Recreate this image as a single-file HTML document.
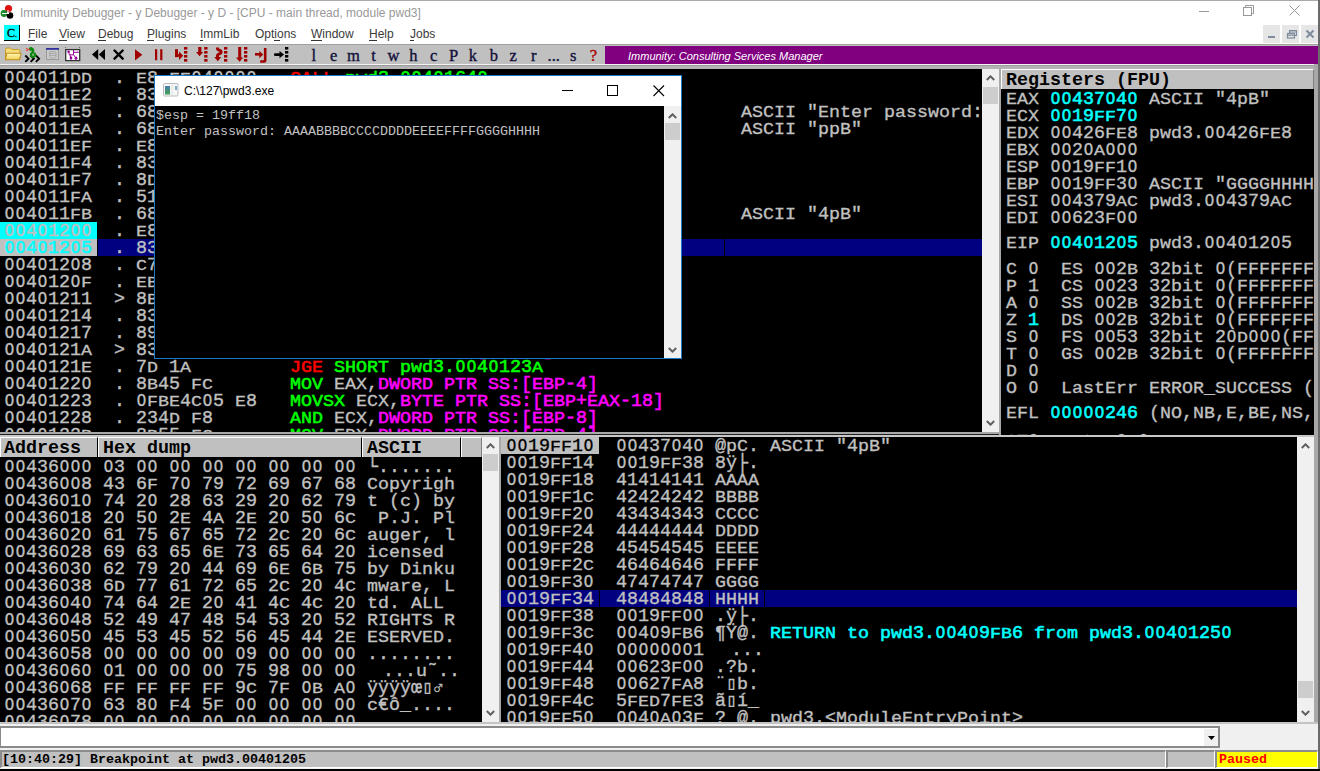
<!DOCTYPE html><html><head><meta charset="utf-8"><style>
*{margin:0;padding:0;box-sizing:border-box}
html,body{width:1320px;height:771px;overflow:hidden;background:#c0c0c0;position:relative}
div{position:absolute}
.t{white-space:pre;font-family:"Liberation Mono",monospace;font-size:18.333px;line-height:17px;height:17px;color:#c0c0c0;-webkit-text-stroke:0.35px currentColor}
.t i{font-style:normal;display:inline-block;transform-origin:0 13.4px}
.t i.c{transform:scaleY(.85)}
.t i.l{transform:scaleY(.9)}
.nh i.c,.nh i.l{transform:none}
.t b{font-weight:inherit;display:inline-block;transform:scaleX(.86)}
.t i.s{transform:scaleY(.75)}
.clip{overflow:hidden}
.ui{font-family:"Liberation Sans",sans-serif;font-size:12px;white-space:pre}
.sb{background:#f0f0f0}
.hdr{background:#c0c0c0;border-top:1px solid #fff;border-left:1px solid #fff;border-right:1px solid #808080}
.ht{font-weight:bold;color:#000}
</style></head><body>

<div style="left:0;top:0;width:1320px;height:1px;background:#aaa"></div>
<div style="left:0;top:1px;width:1318px;height:43px;background:#fff"></div>
<div style="left:1318px;top:0;width:2px;height:771px;background:#6a6a6a"></div>
<svg style="position:absolute;left:0;top:4px" width="16" height="16" viewBox="0 0 16 16">
<circle cx="8.5" cy="4.5" r="3.6" fill="#e01010"/><circle cx="4" cy="9.5" r="3.4" fill="#1a8a2a"/><circle cx="10" cy="11.5" r="3.3" fill="#000"/>
<path d="M2 9.5h7M8 6v4" stroke="#fff" stroke-width="1"/></svg>
<div class="ui" style="left:20px;top:6px;color:#999;font-size:12px">Immunity Debugger - y Debugger - y D - [CPU - main thread, module pwd3]</div>
<div style="left:1199px;top:11px;width:10px;height:1px;background:#999"></div>
<svg style="position:absolute;left:1243px;top:5px" width="12" height="12"><rect x="0.5" y="2.5" width="8" height="8" fill="none" stroke="#999"/><path d="M2.5 2.5V0.5H10.5V8.5H8.5" fill="none" stroke="#999"/></svg>
<svg style="position:absolute;left:1289px;top:5px" width="12" height="12"><path d="M0.5 0.5L10.5 10.5M10.5 0.5L0.5 10.5" stroke="#999" stroke-width="1"/></svg>
<div style="left:4px;top:25px;width:16px;height:16px;background:#00ffff;border-right:1px solid #000;border-bottom:1px solid #000"></div>
<div style="left:7px;top:26px;font:12px/14px 'Liberation Serif';color:#000;-webkit-text-stroke:0.3px #000">C<span style="font-size:8px">.</span></div>
<div class="ui" style="left:28px;top:27px;color:#3a3a3a">File</div>
<div class="ui" style="left:59px;top:27px;color:#3a3a3a">View</div>
<div class="ui" style="left:98px;top:27px;color:#3a3a3a">Debug</div>
<div class="ui" style="left:147px;top:27px;color:#3a3a3a">Plugins</div>
<div class="ui" style="left:200px;top:27px;color:#3a3a3a">ImmLib</div>
<div class="ui" style="left:255px;top:27px;color:#3a3a3a">Options</div>
<div class="ui" style="left:311px;top:27px;color:#3a3a3a">Window</div>
<div class="ui" style="left:369px;top:27px;color:#3a3a3a">Help</div>
<div class="ui" style="left:410px;top:27px;color:#3a3a3a">Jobs</div>
<div style="left:28px;top:40px;width:7px;height:1px;background:#333"></div>
<div style="left:59px;top:40px;width:8px;height:1px;background:#333"></div>
<div style="left:98px;top:40px;width:8px;height:1px;background:#333"></div>
<div style="left:147px;top:40px;width:7px;height:1px;background:#333"></div>
<div style="left:200px;top:40px;width:3px;height:1px;background:#333"></div>
<div style="left:274px;top:40px;width:6px;height:1px;background:#333"></div>
<div style="left:311px;top:40px;width:11px;height:1px;background:#333"></div>
<div style="left:369px;top:40px;width:8px;height:1px;background:#333"></div>
<div style="left:410px;top:40px;width:4px;height:1px;background:#333"></div>
<div style="left:1263px;top:25px;width:17px;height:18px;background:#e6e6e6"></div>
<div style="left:1282px;top:25px;width:17px;height:18px;background:#e6e6e6"></div>
<div style="left:1301px;top:25px;width:17px;height:18px;background:#e6e6e6"></div>
<div style="left:1268px;top:36px;width:7px;height:2px;background:#7d8b9c"></div>
<svg style="position:absolute;left:1286px;top:29px" width="12" height="10"><rect x="1.5" y="4.5" width="7" height="4.5" fill="none" stroke="#7d8b9c" stroke-width="1.2"/><path d="M1.5 6.2h7" stroke="#7d8b9c" stroke-width="1.2"/><path d="M3.5 4.5V1.5H10.5V6.5H8.5M3.5 3h7" fill="none" stroke="#7d8b9c" stroke-width="1.1"/></svg>
<svg style="position:absolute;left:1305px;top:29px" width="10" height="10"><path d="M1.5 1.5L8.5 8.5M8.5 1.5L1.5 8.5" stroke="#7d8b9c" stroke-width="2"/></svg>
<div style="left:0;top:44px;width:1318px;height:1px;background:#a0a0a0"></div>
<div style="left:0;top:45px;width:1318px;height:19px;background:#c0c0c0"></div>
<div style="left:0;top:64px;width:1318px;height:1px;background:#f4f4f4"></div>
<div style="left:0;top:65px;width:1318px;height:4px;background:#b4b4b4;border-top:1px solid #9c9c9c"></div>
<svg style="position:absolute;left:0;top:44px" width="300" height="22" viewBox="0 0 300 22">
<defs><linearGradient id="fg" x1="0" y1="0" x2="0" y2="1"><stop offset="0" stop-color="#fff6b0"/><stop offset="1" stop-color="#f2d25a"/></linearGradient></defs>
<path d="M5.5 5.5q0-1.5 1.5-1.5h3.5l1.5 1.5h6.5q1.5 0 1.5 1.5v8.5h-14.5z" fill="#f6dc78" stroke="#c89a28" stroke-width="1"/>
<path d="M6.8 9.2h13.5q1 0 .7 1l-1.6 5.6h-14z" fill="url(#fg)" stroke="#c08f20" stroke-width="1.1"/>
<path d="M25.3 11.5l3.2 3.2-3.2 3.2M30.6 11.5l3.2 3.2-3.2 3.2M35.9 11.5l3.2 3.2-3.2 3.2" fill="none" stroke="#000" stroke-width="1.9"/>
<circle cx="30.8" cy="5" r="2" fill="#0a8a0a"/><path d="M30.8 4.6C33.6 4.6 34 7 32 8.8 29.8 10.8 31.5 13.5 34 12.6 36 11.8 35.6 9.2 33.4 9.5" fill="none" stroke="#0a8a0a" stroke-width="2.3"/>
<path d="M28 5.5h1.8M28 5.5l-1.8-1.3M28 5.5l-1.6 1.6" stroke="#f03a3a" stroke-width="1.2"/>
<rect x="46.5" y="4.5" width="12" height="11" fill="#cacaca" stroke="#9a9a9a"/><rect x="46" y="4" width="13" height="1.8" fill="#30309a"/>
<rect x="49.5" y="7.5" width="6.5" height="6.5" rx="1.5" fill="none" stroke="#a8a8a8"/><path d="M50 9.5h5.5M50 11.5h6" stroke="#a8a8a8"/>
<rect x="65.7" y="5.6" width="14" height="11" fill="#fff" stroke="#333" stroke-width="1.3"/>
<path d="M65.5 3v1M79.5 3v1" stroke="#666"/>
<g fill="#990099" stroke="#990099"><circle cx="68.6" cy="7.8" r="1.3" stroke="none"/><path d="M68.8 8.5l.6 2.3h4.1M73.5 6v4.8M73.5 8.3h4.3M73.5 10.8l2 2.6M70 10.8l.5 2.5" fill="none" stroke-width="1"/>
<ellipse cx="71" cy="14" rx="1.3" ry="1.7" stroke="none"/><ellipse cx="76" cy="14.2" rx="1.4" ry="1.6" stroke="none"/><circle cx="78" cy="8.3" r=".8" stroke="none"/></g>
<path d="M92 10.5l6.2-5.5v11zM98.8 10.5l6.2-5.5v11z" fill="#000"/>
<path d="M114.5 6.5l8.2 8.2M122.7 6.5l-8.2 8.2" stroke="#000" stroke-width="2.4" stroke-linecap="round"/>
<path d="M135 5.2l7.3 5.6-7.3 5.6z" fill="#a00000"/>
<rect x="155" y="5.2" width="2.2" height="11" fill="#a00000"/><rect x="160.2" y="5.2" width="2.2" height="11" fill="#a00000"/>
<g fill="#a00000">
<rect x="175" y="5.2" width="3" height="8"/><rect x="175" y="10.2" width="5" height="2.6"/><path d="M179 7.5l4.2 4.2-4.2 4.2z"/>
<rect x="184" y="3" width="3.3" height="2.6"/><rect x="184" y="7" width="3.3" height="2.6"/><rect x="184" y="11" width="3.3" height="2.6"/><rect x="184" y="15" width="3.3" height="2.6"/>
<rect x="198.2" y="3" width="3.2" height="6"/><path d="M196 8h7.2l-3.6 4.2z"/>
<rect x="204.2" y="3" width="3.3" height="2.6"/><rect x="204.2" y="7" width="3.3" height="2.6"/><rect x="204.2" y="11" width="3.3" height="2.6"/><rect x="204.2" y="15" width="3.3" height="2.6"/>
<path d="M217.5 3.5v1.5c0 1.5 3.7.8 3.7 3 0 2.2-3.7 1.5-3.7 3.5v2" fill="none" stroke="#a00000" stroke-width="3"/><path d="M214.2 13h7.2l-3.6 4.2z"/>
<rect x="224" y="3" width="3.3" height="2.6"/><rect x="224" y="7" width="3.3" height="2.6"/><rect x="224" y="11" width="3.3" height="2.6"/><rect x="224" y="15" width="3.3" height="2.6"/>
<rect x="238.2" y="3" width="3" height="11"/><path d="M236 13.5h7.2l-3.6 4.2z"/>
<rect x="244" y="3" width="3.3" height="2.6"/><rect x="244" y="7" width="3.3" height="2.6"/><rect x="244" y="11" width="3.3" height="2.6"/><rect x="244" y="15" width="3.3" height="2.6"/>
<rect x="255" y="9" width="5" height="2.6"/><path d="M259.3 7l4 3.6-4 3.6z"/><path d="M265.2 4v12.5q0 1-1 1h-4" fill="none" stroke="#a00000" stroke-width="2.6"/>
</g>
<rect x="274" y="9.3" width="6.5" height="2.6" rx="1.2" fill="#000"/><path d="M279.5 7l4.6 3.6-4.6 3.6z" fill="#000"/>
<rect x="285" y="3" width="3.3" height="2.6" fill="#000"/><rect x="285" y="7" width="3.3" height="2.6" fill="#000"/><rect x="285" y="11" width="3.3" height="2.6" fill="#000"/><rect x="285" y="15" width="3.3" height="2.6" fill="#000"/>
</svg>
<div style="left:303.9px;top:46px;width:20px;text-align:center;font:16.5px 'Liberation Serif';color:#10103a;white-space:pre;-webkit-text-stroke:0.35px #10103a">l</div>
<div style="left:323.7px;top:46px;width:20px;text-align:center;font:16.5px 'Liberation Serif';color:#10103a;white-space:pre;-webkit-text-stroke:0.35px #10103a">e</div>
<div style="left:343.5px;top:46px;width:20px;text-align:center;font:16.5px 'Liberation Serif';color:#10103a;white-space:pre;-webkit-text-stroke:0.35px #10103a">m</div>
<div style="left:363.5px;top:46px;width:20px;text-align:center;font:16.5px 'Liberation Serif';color:#10103a;white-space:pre;-webkit-text-stroke:0.35px #10103a">t</div>
<div style="left:383.4px;top:46px;width:20px;text-align:center;font:16.5px 'Liberation Serif';color:#10103a;white-space:pre;-webkit-text-stroke:0.35px #10103a">w</div>
<div style="left:403.3px;top:46px;width:20px;text-align:center;font:16.5px 'Liberation Serif';color:#10103a;white-space:pre;-webkit-text-stroke:0.35px #10103a">h</div>
<div style="left:423.7px;top:46px;width:20px;text-align:center;font:16.5px 'Liberation Serif';color:#10103a;white-space:pre;-webkit-text-stroke:0.35px #10103a">c</div>
<div style="left:443.5px;top:46px;width:20px;text-align:center;font:16.5px 'Liberation Serif';color:#10103a;white-space:pre;-webkit-text-stroke:0.35px #10103a">P</div>
<div style="left:462.8px;top:46px;width:20px;text-align:center;font:16.5px 'Liberation Serif';color:#10103a;white-space:pre;-webkit-text-stroke:0.35px #10103a">k</div>
<div style="left:483.8px;top:46px;width:20px;text-align:center;font:16.5px 'Liberation Serif';color:#10103a;white-space:pre;-webkit-text-stroke:0.35px #10103a">b</div>
<div style="left:503.1px;top:46px;width:20px;text-align:center;font:16.5px 'Liberation Serif';color:#10103a;white-space:pre;-webkit-text-stroke:0.35px #10103a">z</div>
<div style="left:523.8px;top:46px;width:20px;text-align:center;font:16.5px 'Liberation Serif';color:#10103a;white-space:pre;-webkit-text-stroke:0.35px #10103a">r</div>
<div style="left:543.8px;top:46px;width:20px;text-align:center;font:16.5px 'Liberation Serif';color:#10103a;white-space:pre;-webkit-text-stroke:0.35px #10103a">...</div>
<div style="left:563.2px;top:46px;width:20px;text-align:center;font:16.5px 'Liberation Serif';color:#10103a;white-space:pre;-webkit-text-stroke:0.35px #10103a">s</div>
<div style="left:583.4px;top:46px;width:20px;text-align:center;font:16.5px 'Liberation Serif';color:#aa0000;white-space:pre;-webkit-text-stroke:0.35px #aa0000">?</div>
<div style="left:605px;top:46px;width:713px;height:18px;background:#800080"></div>
<div class="ui" style="left:628px;top:50px;color:#fff;font-style:italic;font-size:11px">Immunity: Consulting Services Manager</div>
<div class="clip" style="left:0;top:69px;width:982px;height:363px;background:#000">
<div style="left:0;top:153px;width:97px;height:17px;background:#00ffff"></div>
<div style="left:0;top:170px;width:97px;height:17px;background:#c0c0c0"></div>
<div style="left:98px;top:170px;width:626px;height:17px;background:#000080"></div>
<div style="left:725px;top:170px;width:257px;height:17px;background:#000080"></div>
<div class="t" style="left:4px;top:1px"><b>O</b><b>O</b>4<b>O</b>11<i class="s">DD</i>  . <i class="s">E</i>8 <i class="s">FE</i><b>O</b>4<b>O</b><b>O</b><b>O</b><b>O</b>   <span style="color:#ff0000;-webkit-text-stroke:0.6px #ff0000"><i class="c">CA</i><i class="c">LL</i></span><span style="color:#00ff00;-webkit-text-stroke:0.6px #00ff00"> <i class="l">pwd</i>3.<b>O</b><b>O</b>4<b>O</b>164<b>O</b></span></div>
<div class="t" style="left:4px;top:18px"><b>O</b><b>O</b>4<b>O</b>11<i class="s">E</i>2  . 83<i class="s">C</i>4 <b>O</b>8       <span style="color:#00ff00;-webkit-text-stroke:0.6px #00ff00"><i class="c">ADD</i></span> <i class="c">E</i><i class="c">SP</i>,8</div>
<div class="t" style="left:4px;top:35px"><b>O</b><b>O</b>4<b>O</b>11<i class="s">E</i>5  . 68 1<b>O</b>7<b>O</b>43<b>O</b><b>O</b>   <span style="color:#00ff00;-webkit-text-stroke:0.6px #00ff00"><i class="c">PUSH</i></span> <i class="l">pwd</i>3.<b>O</b><b>O</b>437<b>O</b>1<b>O</b></div>
<div class="t" style="left:741px;top:35px"><i class="c">A</i><i class="c">S</i><i class="c">C</i><i class="c">II</i> "<i class="c">E</i><i class="l">nter</i> <i class="l">password</i>: "</div>
<div class="t" style="left:4px;top:52px"><b>O</b><b>O</b>4<b>O</b>11<i class="s">EA</i>  . 68 <b>O</b><i class="s">C</i>7<b>O</b>43<b>O</b><b>O</b>   <span style="color:#00ff00;-webkit-text-stroke:0.6px #00ff00"><i class="c">PUSH</i></span> <i class="l">pwd</i>3.<b>O</b><b>O</b>437<b>O</b><b>O</b><i class="s">C</i></div>
<div class="t" style="left:741px;top:52px"><i class="c">A</i><i class="c">S</i><i class="c">C</i><i class="c">II</i> "<i class="l">pp</i><i class="c">B</i>"</div>
<div class="t" style="left:4px;top:69px"><b>O</b><b>O</b>4<b>O</b>11<i class="s">EF</i>  . <i class="s">E</i>8 <i class="s">EC</i><b>O</b>4<b>O</b><b>O</b><b>O</b><b>O</b>   <span style="color:#ff0000;-webkit-text-stroke:0.6px #ff0000"><i class="c">CA</i><i class="c">LL</i></span><span style="color:#00ff00;-webkit-text-stroke:0.6px #00ff00"> <i class="l">pwd</i>3.<b>O</b><b>O</b>4<b>O</b>16<i class="s">E</i><b>O</b></span></div>
<div class="t" style="left:4px;top:86px"><b>O</b><b>O</b>4<b>O</b>11<i class="s">F</i>4  . 83<i class="s">C</i>4 <b>O</b>8       <span style="color:#00ff00;-webkit-text-stroke:0.6px #00ff00"><i class="c">ADD</i></span> <i class="c">E</i><i class="c">SP</i>,8</div>
<div class="t" style="left:4px;top:103px"><b>O</b><b>O</b>4<b>O</b>11<i class="s">F</i>7  . 8<i class="s">D</i>4<i class="s">D</i> <i class="s">E</i>8       <span style="color:#00ff00;-webkit-text-stroke:0.6px #00ff00"><i class="c">L</i><i class="c">EA</i></span> <i class="c">EC</i><i class="c">X</i>,<span style="color:#ff00ff;-webkit-text-stroke:0.6px #ff00ff"><i class="c">D</i><i class="c">WOR</i><i class="c">D</i> <i class="c">PTR</i> <i class="c">SS</i>:[<i class="c">EB</i><i class="c">P</i>-18]</span></div>
<div class="t" style="left:4px;top:120px"><b>O</b><b>O</b>4<b>O</b>11<i class="s">FA</i>  . 51            <span style="color:#00ff00;-webkit-text-stroke:0.6px #00ff00"><i class="c">PUSH</i></span> <i class="c">EC</i><i class="c">X</i></div>
<div class="t" style="left:4px;top:137px"><b>O</b><b>O</b>4<b>O</b>11<i class="s">FB</i>  . 68 4<b>O</b>7<b>O</b>43<b>O</b><b>O</b>   <span style="color:#00ff00;-webkit-text-stroke:0.6px #00ff00"><i class="c">PUSH</i></span> <i class="l">pwd</i>3.<b>O</b><b>O</b>437<b>O</b>4<b>O</b></div>
<div class="t" style="left:741px;top:137px"><i class="c">A</i><i class="c">S</i><i class="c">C</i><i class="c">II</i> "4<i class="l">p</i><i class="c">B</i>"</div>
<div class="t" style="left:4px;top:154px"><b>O</b><b>O</b>4<b>O</b>12<b>O</b><b>O</b>  . <i class="s">E</i>8 2<i class="s">B</i><b>O</b>3<b>O</b><b>O</b><b>O</b><b>O</b>   <span style="color:#ff0000;-webkit-text-stroke:0.6px #ff0000"><i class="c">CA</i><i class="c">LL</i></span><span style="color:#00ff00;-webkit-text-stroke:0.6px #00ff00"> <i class="l">pwd</i>3.<b>O</b><b>O</b>4<b>O</b>153<b>O</b></span></div>
<div class="t" style="left:4px;top:171px"><span style="color:#00ffff;-webkit-text-stroke:0.6px #00ffff"><b>O</b><b>O</b>4<b>O</b>12<b>O</b>5</span>  . 83<i class="s">C</i>4 <b>O</b>8       <span style="color:#00ff00;-webkit-text-stroke:0.6px #00ff00"><i class="c">ADD</i></span> <i class="c">E</i><i class="c">SP</i>,8</div>
<div class="t" style="left:4px;top:188px"><b>O</b><b>O</b>4<b>O</b>12<b>O</b>8  . <i class="s">C</i>745 <i class="s">FC</i> <b>O</b><b>O</b><b>O</b><b>O</b><b>O</b><b>O</b><b>O</b><b>O</b><span style="color:#00ff00;-webkit-text-stroke:0.6px #00ff00"><i class="c">MOV</i></span> <span style="color:#ff00ff;-webkit-text-stroke:0.6px #ff00ff"><i class="c">D</i><i class="c">WOR</i><i class="c">D</i> <i class="c">PTR</i> <i class="c">SS</i>:[<i class="c">EB</i><i class="c">P</i>-4]</span>,<b>O</b></div>
<div class="t" style="left:4px;top:205px"><b>O</b><b>O</b>4<b>O</b>12<b>O</b><i class="s">F</i>  . <i class="s">EB</i> <b>O</b>9         <span style="color:#00ff00;-webkit-text-stroke:0.6px #00ff00"><i class="c">JMP</i></span><span style="color:#00ff00;-webkit-text-stroke:0.6px #00ff00"> <i class="c">SHORT</i> <i class="l">pwd</i>3.<b>O</b><b>O</b>4<b>O</b>121<i class="s">A</i></span></div>
<div class="t" style="left:4px;top:222px"><b>O</b><b>O</b>4<b>O</b>1211  &gt; 8<i class="s">B</i>55 <i class="s">FC</i>       <span style="color:#00ff00;-webkit-text-stroke:0.6px #00ff00"><i class="c">MOV</i></span> <i class="c">ED</i><i class="c">X</i>,<span style="color:#ff00ff;-webkit-text-stroke:0.6px #ff00ff"><i class="c">D</i><i class="c">WOR</i><i class="c">D</i> <i class="c">PTR</i> <i class="c">SS</i>:[<i class="c">EB</i><i class="c">P</i>-4]</span></div>
<div class="t" style="left:4px;top:239px"><b>O</b><b>O</b>4<b>O</b>1214  . 83<i class="s">C</i>2 <b>O</b>1       <span style="color:#00ff00;-webkit-text-stroke:0.6px #00ff00"><i class="c">ADD</i></span> <i class="c">ED</i><i class="c">X</i>,1</div>
<div class="t" style="left:4px;top:256px"><b>O</b><b>O</b>4<b>O</b>1217  . 8955 <i class="s">FC</i>       <span style="color:#00ff00;-webkit-text-stroke:0.6px #00ff00"><i class="c">MOV</i></span> <span style="color:#ff00ff;-webkit-text-stroke:0.6px #ff00ff"><i class="c">D</i><i class="c">WOR</i><i class="c">D</i> <i class="c">PTR</i> <i class="c">SS</i>:[<i class="c">EB</i><i class="c">P</i>-4]</span>,<i class="c">ED</i><i class="c">X</i></div>
<div class="t" style="left:4px;top:273px"><b>O</b><b>O</b>4<b>O</b>121<i class="s">A</i>  &gt; 837<i class="s">D</i> <i class="s">FC</i> <b>O</b>4    <span style="color:#00ff00;-webkit-text-stroke:0.6px #00ff00"><i class="c">C</i><i class="c">MP</i></span> <span style="color:#ff00ff;-webkit-text-stroke:0.6px #ff00ff"><i class="c">D</i><i class="c">WOR</i><i class="c">D</i> <i class="c">PTR</i> <i class="c">SS</i>:[<i class="c">EB</i><i class="c">P</i>-4]</span>,4</div>
<div class="t" style="left:4px;top:290px"><b>O</b><b>O</b>4<b>O</b>121<i class="s">E</i>  . 7<i class="s">D</i> 1<i class="s">A</i>         <span style="color:#ff0000;-webkit-text-stroke:0.6px #ff0000"><i class="c">JG</i><i class="c">E</i></span><span style="color:#00ff00;-webkit-text-stroke:0.6px #00ff00"> <i class="c">SHORT</i> <i class="l">pwd</i>3.<b>O</b><b>O</b>4<b>O</b>123<i class="s">A</i></span></div>
<div class="t" style="left:4px;top:307px"><b>O</b><b>O</b>4<b>O</b>122<b>O</b>  . 8<i class="s">B</i>45 <i class="s">FC</i>       <span style="color:#00ff00;-webkit-text-stroke:0.6px #00ff00"><i class="c">MOV</i></span> <i class="c">EA</i><i class="c">X</i>,<span style="color:#ff00ff;-webkit-text-stroke:0.6px #ff00ff"><i class="c">D</i><i class="c">WOR</i><i class="c">D</i> <i class="c">PTR</i> <i class="c">SS</i>:[<i class="c">EB</i><i class="c">P</i>-4]</span></div>
<div class="t" style="left:4px;top:324px"><b>O</b><b>O</b>4<b>O</b>1223  . <b>O</b><i class="s">FBE</i>4<i class="s">C</i><b>O</b>5 <i class="s">E</i>8   <span style="color:#00ff00;-webkit-text-stroke:0.6px #00ff00"><i class="c">MOVSX</i></span> <i class="c">EC</i><i class="c">X</i>,<span style="color:#ff00ff;-webkit-text-stroke:0.6px #ff00ff"><i class="c">B</i><i class="c">YT</i><i class="c">E</i> <i class="c">PTR</i> <i class="c">SS</i>:[<i class="c">EB</i><i class="c">P</i>+<i class="c">EA</i><i class="c">X</i>-18]</span></div>
<div class="t" style="left:4px;top:341px"><b>O</b><b>O</b>4<b>O</b>1228  . 234<i class="s">D</i> <i class="s">F</i>8       <span style="color:#00ff00;-webkit-text-stroke:0.6px #00ff00"><i class="c">A</i><i class="c">N</i><i class="c">D</i></span> <i class="c">EC</i><i class="c">X</i>,<span style="color:#ff00ff;-webkit-text-stroke:0.6px #ff00ff"><i class="c">D</i><i class="c">WOR</i><i class="c">D</i> <i class="c">PTR</i> <i class="c">SS</i>:[<i class="c">EB</i><i class="c">P</i>-8]</span></div>
<div class="t" style="left:4px;top:358px"><b>O</b><b>O</b>4<b>O</b>122<i class="s">B</i>  . 8<i class="s">B</i>55 <i class="s">FC</i>       <span style="color:#00ff00;-webkit-text-stroke:0.6px #00ff00"><i class="c">MOV</i></span> <i class="c">ED</i><i class="c">X</i>,<span style="color:#ff00ff;-webkit-text-stroke:0.6px #ff00ff"><i class="c">D</i><i class="c">WOR</i><i class="c">D</i> <i class="c">PTR</i> <i class="c">SS</i>:[<i class="c">EB</i><i class="c">P</i>-4]</span></div>
</div>
<div class="sb" style="left:982px;top:69px;width:17px;height:363px"></div>
<div style="left:983px;top:87px;width:15px;height:17px;background:#cdcdcd"></div>
<div style="left:999px;top:69px;width:2px;height:368px;background:#a8a8a8"></div>
<div class="clip" style="left:1001px;top:69px;width:313px;height:366px;background:#000">
<div class="hdr" style="left:0;top:0;width:313px;height:20px"></div>
<div class="t nh" style="left:5px;top:3px;font-weight:bold;-webkit-text-stroke:0"><span style="color:#000000"><i class="c">R</i><i class="l">egisters</i> (<i class="c">F</i><i class="c">PU</i>)</span></div>
<div class="t" style="left:5px;top:22px"><i class="c">EA</i><i class="c">X</i> <span style="color:#00ffff;-webkit-text-stroke:0.6px #00ffff"><b>O</b><b>O</b>437<b>O</b>4<b>O</b></span> <i class="c">A</i><i class="c">S</i><i class="c">C</i><i class="c">II</i> "4<i class="l">p</i><i class="c">B</i>"</div>
<div class="t" style="left:5px;top:39px"><i class="c">EC</i><i class="c">X</i> <span style="color:#00ffff;-webkit-text-stroke:0.6px #00ffff"><b>O</b><b>O</b>19<i class="s">FF</i>7<b>O</b></span></div>
<div class="t" style="left:5px;top:56px"><i class="c">ED</i><i class="c">X</i> <b>O</b><b>O</b>426<i class="s">FE</i>8 <i class="l">pwd</i>3.<b>O</b><b>O</b>426<i class="s">FE</i>8</div>
<div class="t" style="left:5px;top:73px"><i class="c">EB</i><i class="c">X</i> <b>O</b><b>O</b>2<b>O</b><i class="s">A</i><b>O</b><b>O</b><b>O</b></div>
<div class="t" style="left:5px;top:90px"><i class="c">E</i><i class="c">SP</i> <b>O</b><b>O</b>19<i class="s">FF</i>1<b>O</b></div>
<div class="t" style="left:5px;top:107px"><i class="c">EB</i><i class="c">P</i> <b>O</b><b>O</b>19<i class="s">FF</i>3<b>O</b> <i class="c">A</i><i class="c">S</i><i class="c">C</i><i class="c">II</i> "<i class="c">GGGGHHHH</i>"</div>
<div class="t" style="left:5px;top:124px"><i class="c">E</i><i class="c">SI</i> <b>O</b><b>O</b>4379<i class="s">AC</i> <i class="l">pwd</i>3.<b>O</b><b>O</b>4379<i class="s">AC</i></div>
<div class="t" style="left:5px;top:141px"><i class="c">ED</i><i class="c">I</i> <b>O</b><b>O</b>623<i class="s">F</i><b>O</b><b>O</b></div>
<div class="t" style="left:5px;top:166px"><i class="c">E</i><i class="c">IP</i> <span style="color:#00ffff;-webkit-text-stroke:0.6px #00ffff"><b>O</b><b>O</b>4<b>O</b>12<b>O</b>5</span> <i class="l">pwd</i>3.<b>O</b><b>O</b>4<b>O</b>12<b>O</b>5</div>
<div class="t" style="left:5px;top:192px"><i class="c">C</i> <b>O</b>  <i class="c">E</i><i class="c">S</i> <b>O</b><b>O</b>2<i class="s">B</i> 32<i class="l">bit</i> <b>O</b>(<i class="c">FFFFFFFF</i>)</div>
<div class="t" style="left:5px;top:209px"><i class="c">P</i> 1  <i class="c">C</i><i class="c">S</i> <b>O</b><b>O</b>23 32<i class="l">bit</i> <b>O</b>(<i class="c">FFFFFFFF</i>)</div>
<div class="t" style="left:5px;top:226px"><i class="c">A</i> <b>O</b>  <i class="c">SS</i> <b>O</b><b>O</b>2<i class="s">B</i> 32<i class="l">bit</i> <b>O</b>(<i class="c">FFFFFFFF</i>)</div>
<div class="t" style="left:5px;top:243px"><i class="c">Z</i> <span style="color:#00ffff;-webkit-text-stroke:0.6px #00ffff">1</span>  <i class="c">D</i><i class="c">S</i> <b>O</b><b>O</b>2<i class="s">B</i> 32<i class="l">bit</i> <b>O</b>(<i class="c">FFFFFFFF</i>)</div>
<div class="t" style="left:5px;top:260px"><i class="c">S</i> <b>O</b>  <i class="c">F</i><i class="c">S</i> <b>O</b><b>O</b>53 32<i class="l">bit</i> 2<b>O</b><i class="s">D</i><b>O</b><b>O</b><b>O</b>(<i class="c">FFF</i>)</div>
<div class="t" style="left:5px;top:277px"><i class="c">T</i> <b>O</b>  <i class="c">GS</i> <b>O</b><b>O</b>2<i class="s">B</i> 32<i class="l">bit</i> <b>O</b>(<i class="c">FFFFFFFF</i>)</div>
<div class="t" style="left:5px;top:294px"><i class="c">D</i> <b>O</b></div>
<div class="t" style="left:5px;top:311px"><i class="c">O</i> <b>O</b>  <i class="c">L</i><i class="l">ast</i><i class="c">E</i><i class="l">rr</i> <i class="c">E</i><i class="c">RROR</i>_<i class="c">SU</i><i class="c">CCE</i><i class="c">SS</i> (<b>O</b><b>O</b><b>O</b><b>O</b><b>O</b><b>O</b><b>O</b><b>O</b>)</div>
<div class="t" style="left:5px;top:336px"><i class="c">EF</i><i class="c">L</i> <span style="color:#00ffff;-webkit-text-stroke:0.6px #00ffff"><b>O</b><b>O</b><b>O</b><b>O</b><b>O</b>246</span> (<i class="c">NO</i>,<i class="c">N</i><i class="c">B</i>,<i class="c">E</i>,<i class="c">BE</i>,<i class="c">NS</i>,<i class="c">P</i><i class="c">E</i>,<i class="c">G</i><i class="c">E</i>,<i class="c">L</i><i class="c">E</i>)</div>
<div class="t" style="left:5px;top:364px"><i class="c">ST</i><b>O</b> <i class="l">empty</i> <b>O</b>.<b>O</b></div>
</div>
<div style="left:1314px;top:64px;width:4px;height:658px;background:#a8a8a8"></div>
<div style="left:0;top:432px;width:999px;height:2px;background:#a8a8a8"></div>
<div style="left:0;top:434px;width:999px;height:1px;background:#202020"></div>
<div style="left:0;top:435px;width:1314px;height:2px;background:#c8c8c8"></div>
<div class="clip" style="left:0;top:437px;width:482px;height:285px;background:#000">
<div class="hdr" style="left:0;top:0;width:98px;height:20px;border-right:1px solid #000"></div>
<div class="hdr" style="left:98px;top:0;width:264px;height:20px;border-right:1px solid #000"></div>
<div class="hdr" style="left:362px;top:0;width:99px;height:20px;border-right:1px solid #000"></div>
<div class="hdr" style="left:461px;top:0;width:21px;height:20px"></div>
<div class="t nh" style="left:4px;top:3px;font-weight:bold;-webkit-text-stroke:0"><span style="color:#000000"><i class="c">A</i><i class="l">ddress</i></span></div>
<div class="t nh" style="left:103px;top:3px;font-weight:bold;-webkit-text-stroke:0"><span style="color:#000000"><i class="c">H</i><i class="l">ex</i> <i class="l">dump</i></span></div>
<div class="t nh" style="left:367px;top:3px;font-weight:bold;-webkit-text-stroke:0"><span style="color:#000000"><i class="c">A</i><i class="c">S</i><i class="c">C</i><i class="c">II</i></span></div>
<div class="t" style="left:4px;top:22px"><b>O</b><b>O</b>436<b>O</b><b>O</b><b>O</b> <b>O</b>3 <b>O</b><b>O</b> <b>O</b><b>O</b> <b>O</b><b>O</b> <b>O</b><b>O</b> <b>O</b><b>O</b> <b>O</b><b>O</b> <b>O</b><b>O</b> └.......</div>
<div class="t" style="left:4px;top:39px"><b>O</b><b>O</b>436<b>O</b><b>O</b>8 43 6<i class="s">F</i> 7<b>O</b> 79 72 69 67 68 <i class="c">C</i><i class="l">opyrigh</i></div>
<div class="t" style="left:4px;top:56px"><b>O</b><b>O</b>436<b>O</b>1<b>O</b> 74 2<b>O</b> 28 63 29 2<b>O</b> 62 79 <i class="l">t</i> (<i class="l">c</i>) <i class="l">by</i></div>
<div class="t" style="left:4px;top:73px"><b>O</b><b>O</b>436<b>O</b>18 2<b>O</b> 5<b>O</b> 2<i class="s">E</i> 4<i class="s">A</i> 2<i class="s">E</i> 2<b>O</b> 5<b>O</b> 6<i class="s">C</i>  <i class="c">P</i>.<i class="c">J</i>. <i class="c">P</i><i class="l">l</i></div>
<div class="t" style="left:4px;top:90px"><b>O</b><b>O</b>436<b>O</b>2<b>O</b> 61 75 67 65 72 2<i class="s">C</i> 2<b>O</b> 6<i class="s">C</i> <i class="l">auger</i>, <i class="l">l</i></div>
<div class="t" style="left:4px;top:107px"><b>O</b><b>O</b>436<b>O</b>28 69 63 65 6<i class="s">E</i> 73 65 64 2<b>O</b> <i class="l">icensed</i> </div>
<div class="t" style="left:4px;top:124px"><b>O</b><b>O</b>436<b>O</b>3<b>O</b> 62 79 2<b>O</b> 44 69 6<i class="s">E</i> 6<i class="s">B</i> 75 <i class="l">by</i> <i class="c">D</i><i class="l">inku</i></div>
<div class="t" style="left:4px;top:141px"><b>O</b><b>O</b>436<b>O</b>38 6<i class="s">D</i> 77 61 72 65 2<i class="s">C</i> 2<b>O</b> 4<i class="s">C</i> <i class="l">mware</i>, <i class="c">L</i></div>
<div class="t" style="left:4px;top:158px"><b>O</b><b>O</b>436<b>O</b>4<b>O</b> 74 64 2<i class="s">E</i> 2<b>O</b> 41 4<i class="s">C</i> 4<i class="s">C</i> 2<b>O</b> <i class="l">td</i>. <i class="c">A</i><i class="c">LL</i> </div>
<div class="t" style="left:4px;top:175px"><b>O</b><b>O</b>436<b>O</b>48 52 49 47 48 54 53 2<b>O</b> 52 <i class="c">RIGHTS</i> <i class="c">R</i></div>
<div class="t" style="left:4px;top:192px"><b>O</b><b>O</b>436<b>O</b>5<b>O</b> 45 53 45 52 56 45 44 2<i class="s">E</i> <i class="c">E</i><i class="c">S</i><i class="c">E</i><i class="c">RV</i><i class="c">ED</i>.</div>
<div class="t" style="left:4px;top:209px"><b>O</b><b>O</b>436<b>O</b>58 <b>O</b><b>O</b> <b>O</b><b>O</b> <b>O</b><b>O</b> <b>O</b><b>O</b> <b>O</b>9 <b>O</b><b>O</b> <b>O</b><b>O</b> <b>O</b><b>O</b> ........</div>
<div class="t" style="left:4px;top:226px"><b>O</b><b>O</b>436<b>O</b>6<b>O</b> <b>O</b>1 <b>O</b><b>O</b> <b>O</b><b>O</b> <b>O</b><b>O</b> 75 98 <b>O</b><b>O</b> <b>O</b><b>O</b> <em style="display:inline-block;width:16px"></em>...<i class="l">u</i>˜..</div>
<div class="t" style="left:4px;top:243px"><b>O</b><b>O</b>436<b>O</b>68 <i class="s">FF</i> <i class="s">FF</i> <i class="s">FF</i> <i class="s">FF</i> 9<i class="s">C</i> 7<i class="s">F</i> <b>O</b><i class="s">B</i> <i class="s">A</i><b>O</b> ÿÿÿÿœ▯♂ </div>
<div class="t" style="left:4px;top:260px"><b>O</b><b>O</b>436<b>O</b>7<b>O</b> 63 8<b>O</b> <i class="s">F</i>4 5<i class="s">F</i> <b>O</b><b>O</b> <b>O</b><b>O</b> <b>O</b><b>O</b> <b>O</b><b>O</b> <i class="l">c</i>€ô_....</div>
<div class="t" style="left:4px;top:277px"><b>O</b><b>O</b>436<b>O</b>78 <b>O</b><b>O</b> <b>O</b><b>O</b> <b>O</b><b>O</b> <b>O</b><b>O</b> <b>O</b><b>O</b> <b>O</b><b>O</b> <b>O</b><b>O</b> <b>O</b><b>O</b> ........</div>
</div>
<div class="sb" style="left:482px;top:437px;width:17px;height:285px"></div>
<div style="left:483px;top:454px;width:15px;height:17px;background:#cdcdcd"></div>
<div style="left:499px;top:437px;width:2px;height:285px;background:#a8a8a8"></div>
<div class="clip" style="left:501px;top:437px;width:796px;height:285px;background:#000">
<div style="left:0;top:0;width:98px;height:17px;background:#c0c0c0"></div>
<div style="left:0;top:153px;width:98px;height:17px;background:#000080"></div>
<div style="left:99px;top:153px;width:109px;height:17px;background:#000080"></div>
<div style="left:209px;top:153px;width:54px;height:17px;background:#000080"></div>
<div style="left:264px;top:153px;width:532px;height:17px;background:#000080"></div>
<div class="t" style="left:5px;top:1px"><span style="color:#000000"><b>O</b><b>O</b>19<i class="s">FF</i>1<b>O</b></span>  <b>O</b><b>O</b>437<b>O</b>4<b>O</b> @<i class="l">p</i><i class="c">C</i>. <i class="c">A</i><i class="c">S</i><i class="c">C</i><i class="c">II</i> "4<i class="l">p</i><i class="c">B</i>"</div>
<div class="t" style="left:5px;top:18px"><b>O</b><b>O</b>19<i class="s">FF</i>14  <b>O</b><b>O</b>19<i class="s">FF</i>38 8ÿ├. </div>
<div class="t" style="left:5px;top:35px"><b>O</b><b>O</b>19<i class="s">FF</i>18  41414141 <i class="c">AAAA</i> </div>
<div class="t" style="left:5px;top:52px"><b>O</b><b>O</b>19<i class="s">FF</i>1<i class="s">C</i>  42424242 <i class="c">BBBB</i> </div>
<div class="t" style="left:5px;top:69px"><b>O</b><b>O</b>19<i class="s">FF</i>2<b>O</b>  43434343 <i class="c">CCCC</i> </div>
<div class="t" style="left:5px;top:86px"><b>O</b><b>O</b>19<i class="s">FF</i>24  44444444 <i class="c">DDDD</i> </div>
<div class="t" style="left:5px;top:103px"><b>O</b><b>O</b>19<i class="s">FF</i>28  45454545 <i class="c">EEEE</i> </div>
<div class="t" style="left:5px;top:120px"><b>O</b><b>O</b>19<i class="s">FF</i>2<i class="s">C</i>  46464646 <i class="c">FFFF</i> </div>
<div class="t" style="left:5px;top:137px"><b>O</b><b>O</b>19<i class="s">FF</i>3<b>O</b>  47474747 <i class="c">GGGG</i> </div>
<div class="t" style="left:5px;top:154px"><b>O</b><b>O</b>19<i class="s">FF</i>34  48484848 <i class="c">HHHH</i> </div>
<div class="t" style="left:5px;top:171px"><b>O</b><b>O</b>19<i class="s">FF</i>38  <b>O</b><b>O</b>19<i class="s">FF</i><b>O</b><b>O</b> .ÿ├. </div>
<div class="t" style="left:5px;top:188px"><b>O</b><b>O</b>19<i class="s">FF</i>3<i class="s">C</i>  <b>O</b><b>O</b>4<b>O</b>9<i class="s">FB</i>6 ¶Ÿ@. <span style="color:#00ffff;-webkit-text-stroke:0.6px #00ffff"><i class="c">R</i><i class="c">E</i><i class="c">TURN</i> <i class="l">to</i> <i class="l">pwd</i>3.<b>O</b><b>O</b>4<b>O</b>9<i class="s">FB</i>6 <i class="l">from</i> <i class="l">pwd</i>3.<b>O</b><b>O</b>4<b>O</b>125<b>O</b></span></div>
<div class="t" style="left:5px;top:205px"><b>O</b><b>O</b>19<i class="s">FF</i>4<b>O</b>  <b>O</b><b>O</b><b>O</b><b>O</b><b>O</b><b>O</b><b>O</b>1 <em style="display:inline-block;width:16px"></em>... </div>
<div class="t" style="left:5px;top:222px"><b>O</b><b>O</b>19<i class="s">FF</i>44  <b>O</b><b>O</b>623<i class="s">F</i><b>O</b><b>O</b> .?<i class="l">b</i>. </div>
<div class="t" style="left:5px;top:239px"><b>O</b><b>O</b>19<i class="s">FF</i>48  <b>O</b><b>O</b>627<i class="s">FA</i>8 ¨▯<i class="l">b</i>. </div>
<div class="t" style="left:5px;top:256px"><b>O</b><b>O</b>19<i class="s">FF</i>4<i class="s">C</i>  5<i class="s">FED</i>7<i class="s">FE</i>3 ã▯í_ </div>
<div class="t" style="left:5px;top:273px"><b>O</b><b>O</b>19<i class="s">FF</i>5<b>O</b>  <b>O</b><b>O</b>4<b>O</b><i class="s">A</i><b>O</b>3<i class="s">F</i> ? @. <i class="l">pwd</i>3.&lt;<i class="c">M</i><i class="l">odule</i><i class="c">E</i><i class="l">ntry</i><i class="c">P</i><i class="l">oint</i>&gt;</div>
</div>
<div class="sb" style="left:1297px;top:437px;width:17px;height:285px"></div>
<div style="left:1298px;top:681px;width:15px;height:17px;background:#cdcdcd"></div>
<svg style="position:absolute;left:986px;top:75px" width="9" height="6"><path d="M0.8 5L4.5 1.3 8.2 5" fill="none" stroke="#606060" stroke-width="2"/></svg>
<svg style="position:absolute;left:986px;top:420px" width="9" height="6"><path d="M0.8 1L4.5 4.7 8.2 1" fill="none" stroke="#606060" stroke-width="2"/></svg>
<svg style="position:absolute;left:486px;top:443px" width="9" height="6"><path d="M0.8 5L4.5 1.3 8.2 5" fill="none" stroke="#606060" stroke-width="2"/></svg>
<svg style="position:absolute;left:486px;top:710px" width="9" height="6"><path d="M0.8 1L4.5 4.7 8.2 1" fill="none" stroke="#606060" stroke-width="2"/></svg>
<svg style="position:absolute;left:1301px;top:443px" width="9" height="6"><path d="M0.8 5L4.5 1.3 8.2 5" fill="none" stroke="#606060" stroke-width="2"/></svg>
<svg style="position:absolute;left:1301px;top:710px" width="9" height="6"><path d="M0.8 1L4.5 4.7 8.2 1" fill="none" stroke="#606060" stroke-width="2"/></svg>
<div style="left:0;top:722px;width:1318px;height:2px;background:#c4c4c4"></div>
<div style="left:0;top:724px;width:1318px;height:45px;background:#f0f0f0"></div>
<div style="left:0;top:726px;width:1220px;height:22px;background:#fff;border-top:2px solid #8a8a8a;border-left:1px solid #8a8a8a;border-right:2px solid #8a8a8a;border-bottom:2px solid #8a8a8a"></div>
<div style="left:1203px;top:728px;width:15px;height:18px;background:#f0f0f0;border-top:1px solid #fff;border-left:1px solid #fff"></div>
<svg style="position:absolute;left:1208px;top:736px" width="7" height="4"><path d="M0 0h7L3.5 4z" fill="#000"/></svg>
<div style="left:0px;top:750px;width:1166px;height:18px;background:#c0c0c0;border-top:2px solid #8c8c8c;border-left:2px solid #8c8c8c;border-right:1px solid #fff;border-bottom:1px solid #fff"></div>
<div style="left:1166px;top:750px;width:49px;height:18px;background:#c0c0c0;border-top:2px solid #8c8c8c;border-left:2px solid #8c8c8c;border-right:1px solid #fff;border-bottom:1px solid #fff"></div>
<div style="left:1215px;top:750px;width:103px;height:18px;background:#ffff00;border-top:2px solid #8c8c8c;border-left:2px solid #8c8c8c;border-right:1px solid #fff;border-bottom:1px solid #fff"></div>
<div style="left:2px;top:752px;font:bold 13.333px 'Liberation Mono';color:#000;white-space:pre;line-height:15px">[10:40:29] Breakpoint at pwd3.00401205</div>
<div style="left:1219px;top:752px;font:bold 13.333px 'Liberation Mono';color:#ff0000;white-space:pre;line-height:15px">Paused</div>
<div style="left:0;top:769px;width:1320px;height:2px;background:#000"></div>
<div style="left:154px;top:75px;width:528px;height:284px;background:#000;border:1px solid #1979ca">
<div style="left:0;top:0;width:526px;height:30px;background:#fff"></div>
<svg style="position:absolute;left:8px;top:7px" width="16" height="14"><defs><linearGradient id="cg" x1="0" y1="0" x2="0" y2="1"><stop offset="0" stop-color="#4a80b0"/><stop offset="1" stop-color="#40a050"/></linearGradient></defs><rect x="0.5" y="0.5" width="14.5" height="12.5" rx="1" fill="#f6f6f6" stroke="#b8bcc0"/><rect x="2" y="3" width="5" height="8.5" fill="url(#cg)"/><rect x="8.5" y="2" width="1" height="10" fill="#e0e0e0"/><rect x="12" y="3" width="2" height="4" fill="#80b0c8"/></svg>
<div class="ui" style="left:29px;top:8px;color:#000">C:\127\pwd3.exe</div>
<div style="left:407px;top:14px;width:11px;height:1px;background:#000"></div>
<div style="left:452px;top:9px;width:11px;height:11px;border:1px solid #000"></div>
<svg style="position:absolute;left:498px;top:9px" width="12" height="12"><path d="M0.5 0.5L11 11M11 0.5L0.5 11" stroke="#000" stroke-width="1.1"/></svg>
<div class="sb" style="left:509px;top:30px;width:17px;height:252px"></div>
<div style="left:510px;top:47px;width:15px;height:17px;background:#cdcdcd"></div>
<svg style="position:absolute;left:513px;top:37px" width="9" height="6"><path d="M0.8 5L4.5 1.3 8.2 5" fill="none" stroke="#606060" stroke-width="2"/></svg>
<svg style="position:absolute;left:513px;top:271px" width="9" height="6"><path d="M0.8 1L4.5 4.7 8.2 1" fill="none" stroke="#606060" stroke-width="2"/></svg>
<div style="left:1px;top:32px;font:13.333px/16px 'Liberation Mono';color:#c0c0c0;white-space:pre">$esp = 19ff18
Enter password: AAAABBBBCCCCDDDDEEEEFFFFGGGGHHHH</div>
</div>
</body></html>
